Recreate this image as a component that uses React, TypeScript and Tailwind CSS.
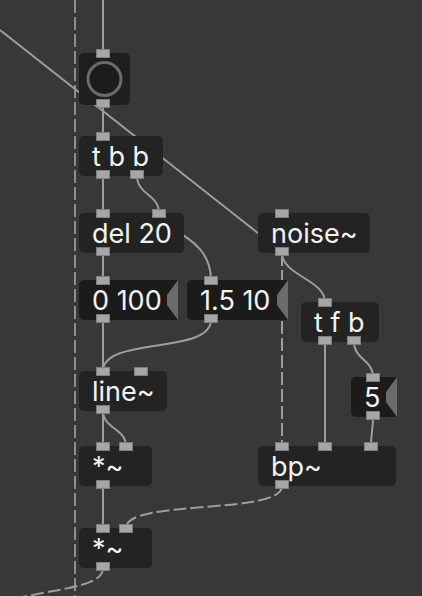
import React from "react";

type Kind = "obj" | "msg" | "bang";
type PatchNode = {
  id: string;
  x: number;
  y: number;
  w: number;
  h: number;
  kind: Kind;
  text?: string;
  ins: number[];
  outs: number[];
};

// Patcher boxes, in canvas pixels. Port offsets are measured from the box's left edge.
const NODES: PatchNode[] = [
  { id: "bang", x: 79, y: 53, w: 51, h: 52, kind: "bang", ins: [17], outs: [17] },
  { id: "tbb", x: 79, y: 136, w: 84, h: 40, kind: "obj", text: "t b b", ins: [17], outs: [17, 51] },
  { id: "del", x: 79, y: 213, w: 105, h: 40, kind: "obj", text: "del 20", ins: [17, 73], outs: [17] },
  { id: "m0", x: 79, y: 280, w: 99, h: 40, kind: "msg", text: "0 100", ins: [17], outs: [17] },
  { id: "m1", x: 187, y: 280, w: 101, h: 40, kind: "msg", text: "1.5 10", ins: [17], outs: [17] },
  { id: "line", x: 79, y: 371, w: 88, h: 40, kind: "obj", text: "line~", ins: [17, 55], outs: [17] },
  { id: "mul1", x: 79, y: 446, w: 73, h: 40, kind: "obj", text: "*~", ins: [17, 40], outs: [17] },
  { id: "mul2", x: 79, y: 528, w: 73, h: 40, kind: "obj", text: "*~", ins: [17, 40], outs: [17] },
  { id: "noise", x: 258, y: 213, w: 112, h: 40, kind: "obj", text: "noise~", ins: [17], outs: [17] },
  { id: "tfb", x: 301, y: 302, w: 78, h: 40, kind: "obj", text: "t f b", ins: [17], outs: [17, 46] },
  { id: "five", x: 351, y: 377, w: 46, h: 40, kind: "msg", text: "5", ins: [15], outs: [15] },
  { id: "bp", x: 258, y: 446, w: 138, h: 40, kind: "obj", text: "bp~", ins: [17, 60, 106], outs: [17] },
];

const byId = Object.fromEntries(NODES.map((n) => [n.id, n]));

type Cord = { from: [string, number]; to: [string, number]; dashed?: boolean; k?: number };

const CORDS: Cord[] = [
  { from: ["bang", 0], to: ["tbb", 0] },
  { from: ["tbb", 0], to: ["del", 0] },
  { from: ["tbb", 1], to: ["del", 1], k: 0.5 },
  { from: ["del", 0], to: ["m0", 0] },
  { from: ["m0", 0], to: ["line", 0] },
  { from: ["m1", 0], to: ["line", 0], k: 0.68 },
  { from: ["line", 0], to: ["mul1", 0] },
  { from: ["line", 0], to: ["mul1", 1], k: 0.5 },
  { from: ["mul1", 0], to: ["mul2", 0] },
  { from: ["bp", 0], to: ["mul2", 1], dashed: true, k: 0.7 },
  { from: ["noise", 0], to: ["bp", 0], dashed: true },
  { from: ["noise", 0], to: ["tfb", 0], k: 0.45 },
  { from: ["tfb", 0], to: ["bp", 1] },
  { from: ["tfb", 1], to: ["five", 0], k: 0.5 },
  { from: ["five", 0], to: ["bp", 2], k: 0.4 },
];

const PORT_W = 14;

function cordPath(c: Cord) {
  const a = byId[c.from[0]];
  const b = byId[c.to[0]];
  const x1 = a.x + a.outs[c.from[1]] + PORT_W / 2;
  const y1 = a.y + a.h;
  const x2 = b.x + b.ins[c.to[1]] + PORT_W / 2;
  const y2 = b.y;
  if (x1 === x2) return `M ${x1} ${y1} L ${x2} ${y2}`;
  const k = (y2 - y1) * (c.k ?? 0.5);
  return `M ${x1} ${y1} C ${x1} ${y1 + k}, ${x2} ${y2 - k}, ${x2} ${y2}`;
}

function Port({ left, edge }: { left: number; edge: "top" | "bottom" }) {
  return (
    <div
      className={`absolute h-[9px] w-[14px] border border-[#7e7e7e] bg-[#a6a6a6] ${
        edge === "top" ? "top-[-4px]" : "bottom-[-3px]"
      }`}
      style={{ left }}
    />
  );
}

function Box({ n }: { n: PatchNode }) {
  const bg =
    n.kind === "msg"
      ? "rounded-l-[5px] bg-[#1b1b1b]"
      : n.kind === "bang"
        ? "rounded-[5px] bg-[#1f1f1f]"
        : "rounded-[5px] bg-[#232323]";
  return (
    <div
      className={`absolute flex items-center pl-[13px] ${bg}`}
      style={{ left: n.x, top: n.y, width: n.w, height: n.h }}
    >
      {n.kind === "bang" && (
        <svg className="absolute left-0 top-0" width={n.w} height={n.h}>
          <circle cx={25.5} cy={26} r={16.5} fill="#1c1c1c" stroke="#6b6b6b" strokeWidth={3} />
        </svg>
      )}
      {n.text && (
        <span className="whitespace-pre text-[27px] leading-none text-[#f3f3f3] [font-family:Inter,'Noto_Sans',sans-serif]">
          {n.text}
        </span>
      )}
      {n.kind === "msg" && (
        <svg className="absolute right-0 top-0" width={11} height={n.h}>
          <polygon points={`11,0 0,15 0,25 11,${n.h}`} fill="#6b6b6b" />
        </svg>
      )}
      {n.ins.map((p, i) => (
        <Port key={`i${i}`} left={p} edge="top" />
      ))}
      {n.outs.map((p, i) => (
        <Port key={`o${i}`} left={p} edge="bottom" />
      ))}
    </div>
  );
}

export default function App() {
  return (
    <div className="relative h-[596px] w-[422px] overflow-hidden bg-[#383838]">
      <svg className="absolute left-0 top-0" width={422} height={596}>
        <g fill="none" stroke="#9d9d9d" strokeWidth={2}>
          {/* guide line */}
          <line x1={75} y1={0} x2={75} y2={596} stroke="#8e8e8e" strokeDasharray="13 4" />
          {/* cords coming from outside the view */}
          <line x1={103} y1={0} x2={103} y2={53} />
          <line x1={0} y1={30} x2={282} y2={252} />
          <path d="M 170 228 C 195 240, 211 255, 211 280" />
          <path d="M 103 568 C 103 588, 55 588, 0 602" strokeDasharray="13 4" />
          {CORDS.map((c, i) => (
            <path key={i} d={cordPath(c)} strokeDasharray={c.dashed ? "13 4" : undefined} />
          ))}
        </g>
      </svg>
      {NODES.map((n) => (
        <Box key={n.id} n={n} />
      ))}
    </div>
  );
}
